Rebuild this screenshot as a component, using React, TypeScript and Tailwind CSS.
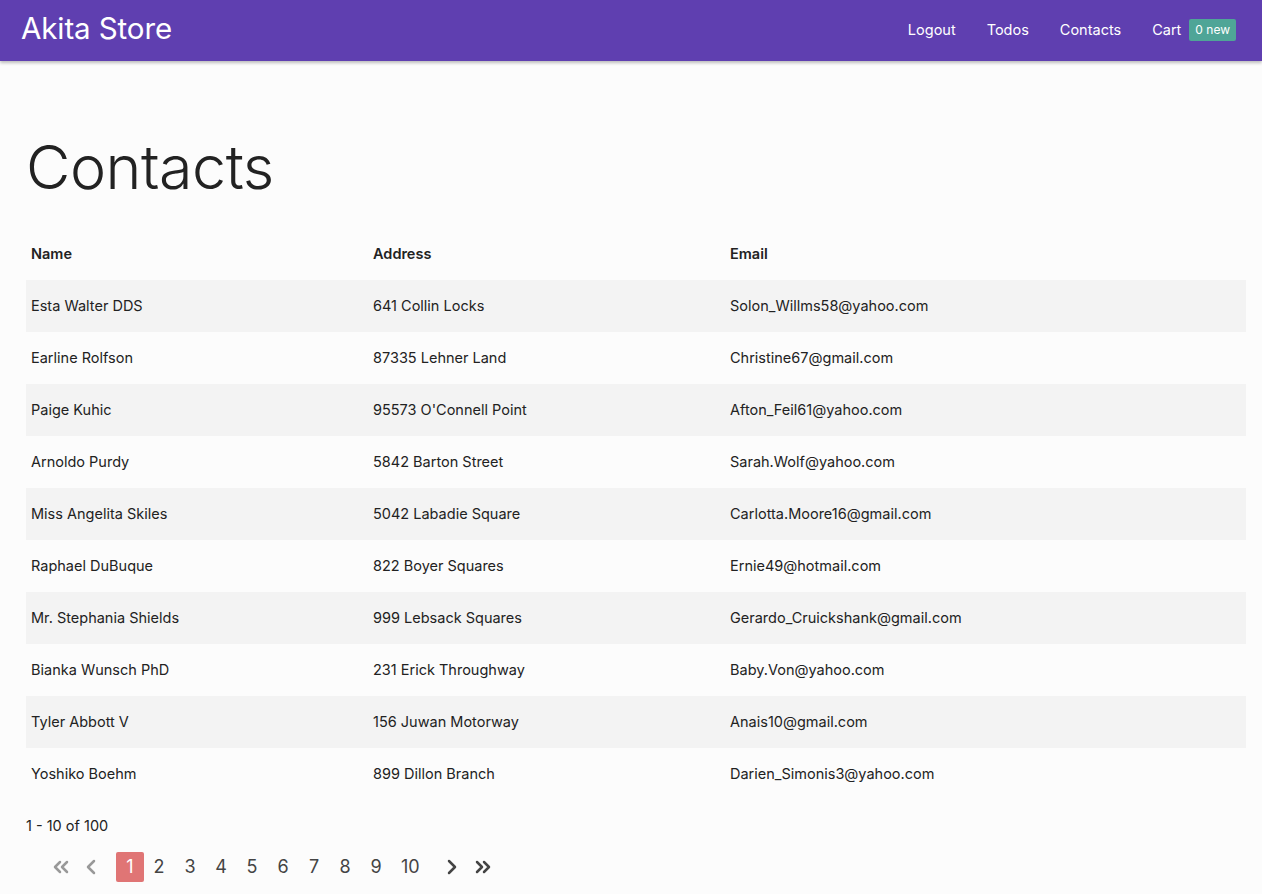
import { ChevronLeft, ChevronRight, ChevronsLeft, ChevronsRight } from 'lucide-react'

interface Contact {
  name: string
  address: string
  email: string
}

const contacts: Contact[] = [
  { name: 'Esta Walter DDS', address: '641 Collin Locks', email: 'Solon_Willms58@yahoo.com' },
  { name: 'Earline Rolfson', address: '87335 Lehner Land', email: 'Christine67@gmail.com' },
  { name: 'Paige Kuhic', address: "95573 O'Connell Point", email: 'Afton_Feil61@yahoo.com' },
  { name: 'Arnoldo Purdy', address: '5842 Barton Street', email: 'Sarah.Wolf@yahoo.com' },
  { name: 'Miss Angelita Skiles', address: '5042 Labadie Square', email: 'Carlotta.Moore16@gmail.com' },
  { name: 'Raphael DuBuque', address: '822 Boyer Squares', email: 'Ernie49@hotmail.com' },
  { name: 'Mr. Stephania Shields', address: '999 Lebsack Squares', email: 'Gerardo_Cruickshank@gmail.com' },
  { name: 'Bianka Wunsch PhD', address: '231 Erick Throughway', email: 'Baby.Von@yahoo.com' },
  { name: 'Tyler Abbott V', address: '156 Juwan Motorway', email: 'Anais10@gmail.com' },
  { name: 'Yoshiko Boehm', address: '899 Dillon Branch', email: 'Darien_Simonis3@yahoo.com' },
]

const pages = [1, 2, 3, 4, 5, 6, 7, 8, 9, 10]

export default function App() {
  return (
    <main
      className="min-h-screen bg-[#fcfcfc] text-[#222]"
      style={{ fontFamily: 'Inter, "Noto Sans", sans-serif' }}
    >
      {/* Navbar */}
      <nav className="h-[61px] bg-[#5f3fb0] text-white flex items-center justify-between pl-[21px] pr-[26px] shadow-[0_2px_3px_rgba(0,0,0,0.25)]">
        <span className="text-[29.5px] leading-none tracking-[-0.1px] -mt-[3px]">Akita Store</span>
        <div className="flex items-center text-[14.5px] -mt-[2px]">
          <a>Logout</a>
          <a className="ml-[31px]">Todos</a>
          <a className="ml-[31px]">Contacts</a>
          <a className="ml-[31px] flex items-center">
            Cart
            <span className="ml-[8px] bg-[#4fa597] text-[12px] rounded-[2px] px-[6px] h-[22px] flex items-center">
              0 new
            </span>
          </a>
        </div>
      </nav>

      <div className="px-[26px] pr-[16px]">
        {/* Header */}
        <h1 className="text-[61px] font-light leading-none mt-[76px] mb-[30px] tracking-[-0.5px]">Contacts</h1>

        {/* Table */}
        <table className="w-full text-[14.5px] border-collapse">
          <thead>
            <tr className="h-[52px] text-left">
              <th className="font-semibold pl-[5px] w-[342px]">Name</th>
              <th className="font-semibold pl-[5px] w-[357px]">Address</th>
              <th className="font-semibold pl-[5px]">Email</th>
            </tr>
          </thead>
          <tbody>
            {contacts.map((c, i) => (
              <tr key={c.email} className={i % 2 === 0 ? 'h-[52px] bg-[#f3f3f3]' : 'h-[52px]'}>
                <td className="pl-[5px]">{c.name}</td>
                <td className="pl-[5px]">{c.address}</td>
                <td className="pl-[5px]">{c.email}</td>
              </tr>
            ))}
          </tbody>
        </table>

        {/* Pagination */}
        <div className="text-[14.5px] mt-[15px]">1 - 10 of 100</div>
        <div className="flex items-center mt-[15px] ml-[23px] text-[18px] text-[#444]">
          <ChevronsLeft className="w-[24px] h-[24px] text-[#999]" strokeWidth={2.5} />
          <ChevronLeft className="w-[24px] h-[24px] text-[#999] ml-[6px]" strokeWidth={2.5} />
          <div className="flex items-center ml-[13px] gap-[3px]">
            {pages.map((p) => (
              <span
                key={p}
                className={
                  p === 1
                    ? 'h-[30px] w-[28px] -mr-[2px] justify-center flex items-center rounded-[2px] bg-[#e07575] text-white'
                    : 'h-[30px] min-w-[28px] px-[8px] justify-center flex items-center'
                }
              >
                {p}
              </span>
            ))}
          </div>
          <ChevronRight className="w-[24px] h-[24px] ml-[12px]" strokeWidth={2.5} />
          <ChevronsRight className="w-[24px] h-[24px] ml-[7px]" strokeWidth={2.5} />
        </div>
      </div>
    </main>
  )
}
